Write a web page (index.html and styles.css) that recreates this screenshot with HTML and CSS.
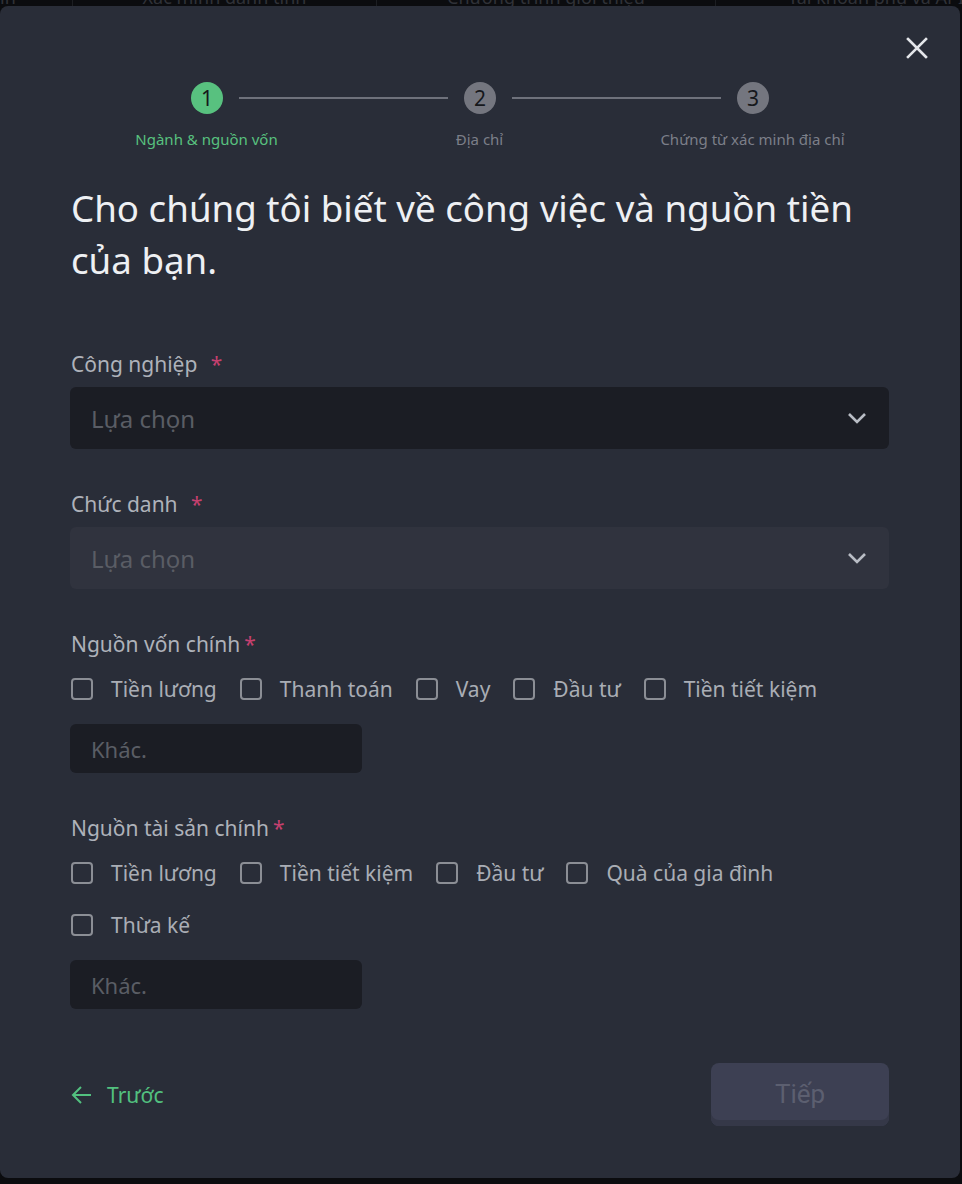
FILE: index.html
```html
<!DOCTYPE html>
<html lang="vi">
<head>
<meta charset="utf-8">
<title>Xác minh</title>
<link rel="stylesheet" href="styles.css">
</head>
<body>
<div class="backdrop-nav">
  <span class="bn-item bn-first">in</span>
  <span class="bn-item bn-2">Xác minh danh tính</span>
  <span class="bn-item bn-3">Chương trình giới thiệu</span>
  <span class="bn-item bn-4">Tài khoản phụ và API</span>
</div>

<div class="modal">
  <button class="close" aria-label="Đóng">
    <svg width="22" height="22" viewBox="0 0 22 22"><path d="M2 2 L20 20 M20 2 L2 20" stroke="#e4e6ea" stroke-width="2.6" stroke-linecap="square"/></svg>
  </button>

  <div class="content">
    <div class="stepper">
      <div class="track">
        <span class="dot active">1</span>
        <span class="line"></span>
        <span class="dot">2</span>
        <span class="line"></span>
        <span class="dot">3</span>
      </div>
      <div class="labels">
        <span class="step-label active">Ngành &amp; nguồn vốn</span>
        <span class="step-label">Địa chỉ</span>
        <span class="step-label">Chứng từ xác minh địa chỉ</span>
      </div>
    </div>

    <h1 class="title">Cho chúng tôi biết về công việc và nguồn tiền của bạn.</h1>

    <div class="field first">
      <div class="label">Công nghiệp <span class="req wide">*</span></div>
      <div class="select">
        <span class="placeholder">Lựa chọn</span>
        <svg class="chev" width="20" height="12" viewBox="0 0 20 12"><path d="M2 2 L10 10 L18 2" fill="none" stroke="#b9bdc5" stroke-width="2.6"/></svg>
      </div>
    </div>

    <div class="field">
      <div class="label">Chức danh <span class="req wide">*</span></div>
      <div class="select disabled">
        <span class="placeholder">Lựa chọn</span>
        <svg class="chev" width="20" height="12" viewBox="0 0 20 12"><path d="M2 2 L10 10 L18 2" fill="none" stroke="#b9bdc5" stroke-width="2.6"/></svg>
      </div>
    </div>

    <div class="field">
      <div class="label">Nguồn vốn chính<span class="req">*</span></div>
      <div class="checks">
        <label class="check"><span class="box"></span>Tiền lương</label>
        <label class="check"><span class="box"></span>Thanh toán</label>
        <label class="check"><span class="box"></span>Vay</label>
        <label class="check"><span class="box"></span>Đầu tư</label>
        <label class="check"><span class="box"></span>Tiền tiết kiệm</label>
      </div>
      <div class="other"><span class="placeholder small">Khác.</span></div>
    </div>

    <div class="field">
      <div class="label">Nguồn tài sản chính<span class="req">*</span></div>
      <div class="checks">
        <label class="check"><span class="box"></span>Tiền lương</label>
        <label class="check"><span class="box"></span>Tiền tiết kiệm</label>
        <label class="check"><span class="box"></span>Đầu tư</label>
        <label class="check"><span class="box"></span>Quà của gia đình</label>
        <label class="check"><span class="box"></span>Thừa kế</label>
      </div>
      <div class="other"><span class="placeholder small">Khác.</span></div>
    </div>

    <div class="footer">
      <a class="back">
        <svg width="22" height="20" viewBox="0 0 22 20"><path d="M20 10 H3 M10 2 L2 10 L10 18" fill="none" stroke="#52c07f" stroke-width="2"/></svg>
        <span>Trước</span>
      </a>
      <button class="next">Tiếp</button>
    </div>
  </div>
</div>
</body>
</html>
```

FILE: styles.css
```css
* { box-sizing: border-box; }
html, body { margin: 0; padding: 0; }
body {
  background: #0b0c0f;
  width: 962px;
  height: 1184px;
  overflow: hidden;
  font-family: "Noto Sans", "Open Sans", sans-serif;
}

.backdrop-nav {
  display: flex;
  height: 20px;
  margin-top: -13px;
  color: #303238;
  font-size: 18px;
  line-height: 20px;
}
.bn-item {
  text-align: center;
  border-left: 1px solid #1c1e22;
  white-space: nowrap;
  overflow: hidden;
}
.bn-first { flex: 0 0 72px; border-left: none; text-align: left; }
.bn-2 { flex: 0 0 304px; }
.bn-3 { flex: 0 0 339px; }
.bn-4 { flex: 1; text-align: left; padding-left: 72px; }

.modal {
  position: fixed;
  top: 6px;
  left: 0;
  width: 960px;
  height: 1172px;
  background: #292d38;
  border-radius: 8px;
}

.close {
  position: absolute;
  top: 31px;
  right: 32px;
  width: 22px;
  height: 22px;
  padding: 0;
  border: none;
  background: none;
}
.close svg { display: block; }

.content {
  padding: 76px 71px 0 70px;
}

/* stepper */
.track {
  display: flex;
  align-items: center;
  padding: 0 120px 0 121px;
}
.dot {
  width: 32px;
  height: 32px;
  border-radius: 50%;
  background: #74767f;
  color: #16181c;
  font-size: 21px;
  line-height: 32px;
  text-align: center;
  flex: none;
}
.dot.active { background: #58c17f; }
.line {
  flex: 1;
  height: 2px;
  background: #6e717b;
  margin: 0 16px;
}
.labels {
  display: grid;
  grid-template-columns: repeat(3, 1fr);
  margin-top: 15px;
}
.step-label {
  text-align: center;
  font-size: 15px;
  line-height: 20px;
  color: #7c7f89;
}
.step-label.active { color: #58c17f; }

.title {
  margin: 33px 0 0 1px;
  font-size: 36.7px;
  line-height: 52px;
  font-weight: 400;
  color: #eef0f3;
  width: 810px;
}

.field { margin-top: 41px; }
.field.first { margin-top: 64px; }
.label {
  font-size: 21px;
  line-height: 28px;
  color: #aeb2ba;
  padding-left: 1px;
  margin-bottom: 9px;
}
.req { color: #c6406f; margin-left: 4px; }
.req.wide { margin-left: 8px; }

.select {
  height: 62px;
  border-radius: 6px;
  background: #1b1d24;
  display: flex;
  align-items: center;
  justify-content: space-between;
  padding: 0 22px 0 21px;
}
.select.disabled { background: #30333e; }
.placeholder {
  font-size: 24px;
  color: #5a5d65;
}
.placeholder.small { font-size: 22px; }

.checks {
  display: flex;
  flex-wrap: wrap;
  column-gap: 23px;
  row-gap: 22px;
  padding-left: 1px;
  margin-top: 16px;
}
.check {
  display: flex;
  align-items: center;
  height: 30px;
  font-size: 21px;
  color: #a9adb5;
}
.box {
  width: 22px;
  height: 22px;
  border: 2px solid #8b8e95;
  border-radius: 4px;
  margin-right: 18px;
  flex: none;
}

.other {
  margin-top: 20px;
  width: 292px;
  height: 49px;
  border-radius: 6px;
  background: #1b1d24;
  display: flex;
  align-items: center;
  padding-left: 21px;
}

.footer {
  margin-top: 54px;
  display: flex;
  align-items: center;
  justify-content: space-between;
}
.back {
  display: flex;
  align-items: center;
  gap: 14px;
  color: #52c07f;
  font-size: 21px;
  padding-left: 1px;
}
.back svg { display: block; }
.next {
  width: 178px;
  height: 63px;
  border: none;
  border-radius: 8px;
  background: #3d4053;
  box-shadow: inset 0 -6px 0 #353848;
  color: #5c5f70;
  font-family: "Roboto", sans-serif;
  font-size: 26px;
  padding-bottom: 2px;
}
```
